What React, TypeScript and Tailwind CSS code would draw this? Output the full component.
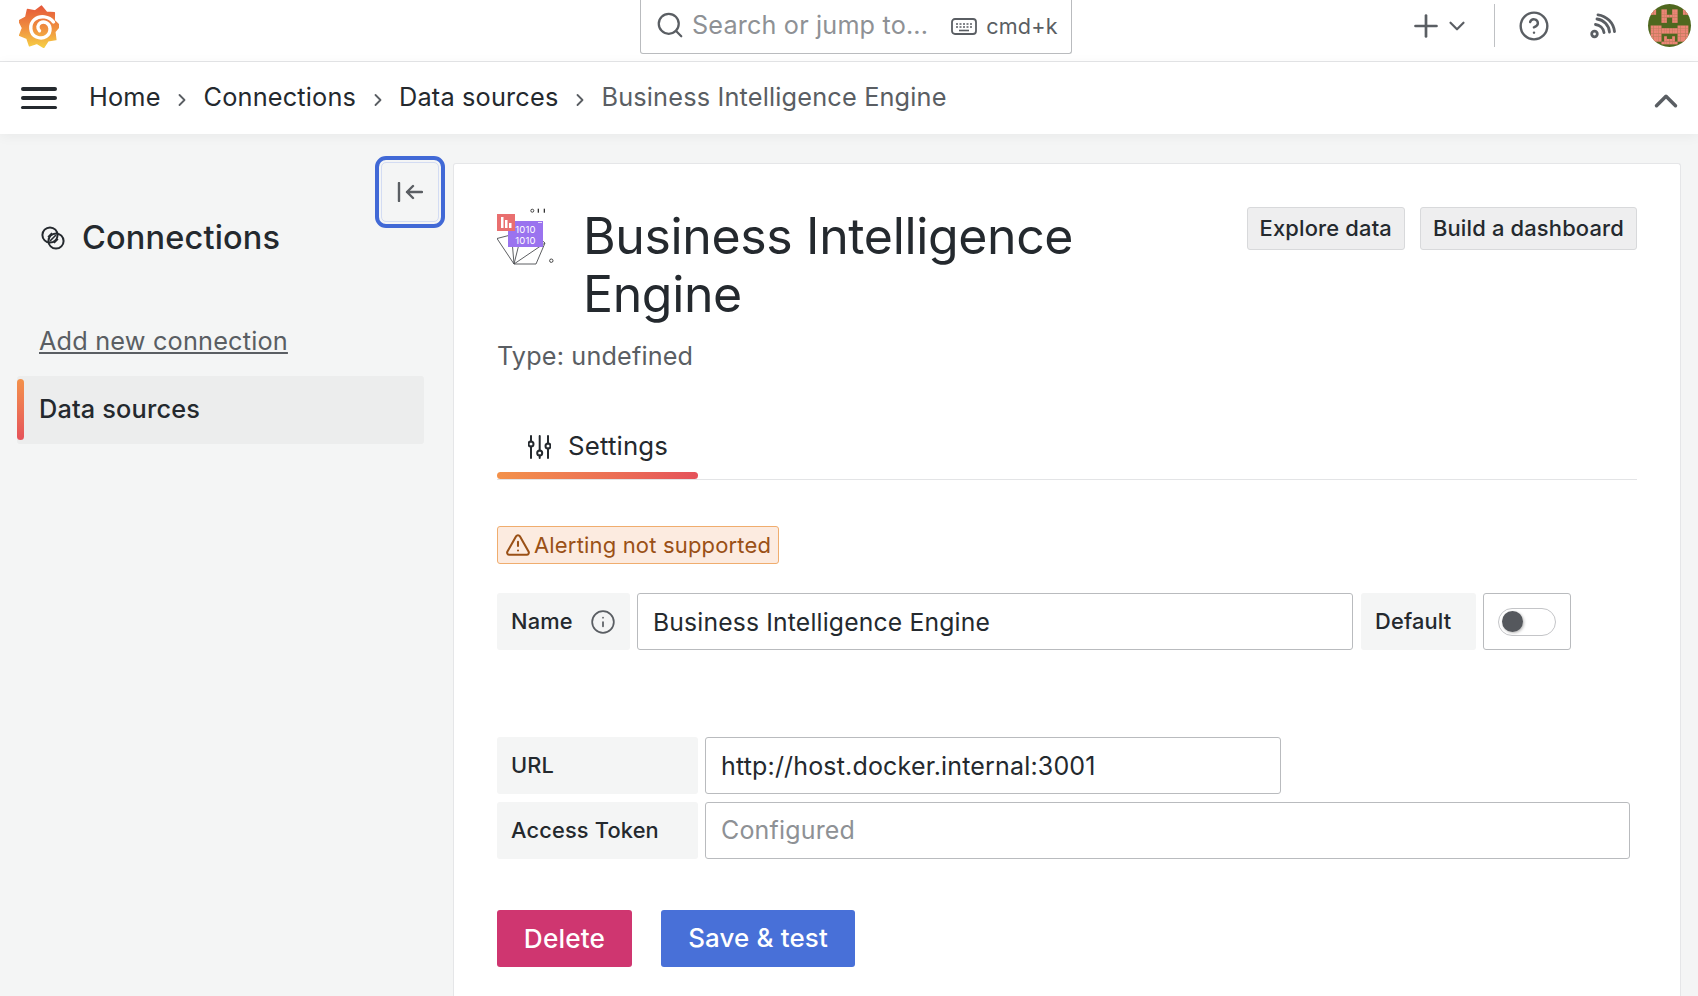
import { ChevronDown, ChevronRight, ChevronUp, CircleHelp, Info, Plus, Search, TriangleAlert } from "lucide-react"

const avatarRows = [
  "........",
  "........",
  ".##..##.",
  ".##..##.",
  ".....###",
  ".....##.",
  ".....##.",
  "........",
  ".####...",
  ".#######",
  ".#######",
  ".####...",
  ".####.#.",
  ".####.##",
  ".....###",
  "........",
]

function Avatar() {
  return (
    <svg width="43" height="43" viewBox="0 0 16 16" className="rounded-full bg-[#4f681f]">
      {avatarRows.map((row, r) =>
        row.split("").map((cell, c) =>
          cell === "#" ? (
            <g key={`${r}-${c}`} fill="#ec8576">
              <rect x={c} y={r} width="1.02" height="1.02" />
              <rect x={15 - c} y={r} width="1.02" height="1.02" />
            </g>
          ) : null,
        ),
      )}
    </svg>
  )
}

function Logo() {
  const points: string[] = []
  for (let i = 0; i < 18; i++) {
    const angle = (i * Math.PI) / 9 - Math.PI / 2 + 0.12
    const radius = i % 2 === 0 ? 21 : 16.5
    points.push(`${20 + radius * Math.cos(angle)},${23 + radius * Math.sin(angle)}`)
  }
  return (
    <svg width="40" height="44" viewBox="0 0 40 44">
      <defs>
        <linearGradient id="sun" x1="0" y1="0" x2="0" y2="1">
          <stop offset="0" stopColor="#e5593a" />
          <stop offset="0.55" stopColor="#f0913f" />
          <stop offset="1" stopColor="#f6cf45" />
        </linearGradient>
      </defs>
      <polygon points={points.join(" ")} fill="url(#sun)" stroke="url(#sun)" strokeWidth="1.5" strokeLinejoin="round" />
      <path
        d="M34.500 18C30 12 21 11 15.500 15.500C10 20 10.500 30 17.500 33C24.500 36 31.500 31.500 31 24.500C30.500 19 25 16.800 21.500 18.800C18.500 20.500 18 24.500 20.500 26.800"
        fill="none"
        stroke="#fff"
        strokeWidth="3.400"
        strokeLinecap="round"
      />
    </svg>
  )
}

function DataSourceIcon() {
  return (
    <svg width="60" height="58" viewBox="27 17 60 58" className="shrink-0">
      <g fill="none" stroke="#4b4d50" strokeWidth="0.9">
        <polygon points="27,48.500 44,74 66,74 75,53 60,40" />
        <path d="M44 74 L42 50 M44 74 L50 50 M44 74 L75 53" />
      </g>
      <rect x="38" y="31" width="35" height="26" fill="#9a73ef" />
      <rect x="68" y="32" width="4" height="1" fill="#e6dcfb" />
      <text x="55.500" y="43" textAnchor="middle" fontSize="9.500" fill="#fff" fontFamily="Inter, sans-serif">1010</text>
      <text x="55.500" y="53.500" textAnchor="middle" fontSize="9.500" fill="#fff" fontFamily="Inter, sans-serif">1010</text>
      <rect x="27" y="24" width="18" height="17" fill="#e96f6f" />
      <path d="M31 38V27h2.500v11zM35 38v-8h2.500v8zM39 38v-5h2.500v5z" fill="#fff" />
      <circle cx="62.300" cy="20.700" r="1.500" fill="none" stroke="#333" strokeWidth="0.9" />
      <rect x="67.700" y="18.700" width="1.300" height="4" fill="#333" />
      <rect x="73.700" y="18.700" width="1.300" height="4" fill="#333" />
      <circle cx="81.300" cy="70.700" r="1.700" fill="none" stroke="#333" strokeWidth="0.9" />
    </svg>
  )
}

function ConnectionsIcon() {
  return (
    <svg width="24" height="24" viewBox="0 0 24 24" fill="none" stroke="#24292e" strokeWidth="2">
      <circle cx="9" cy="9" r="7.600" />
      <circle cx="15" cy="15" r="7.600" />
      <path d="M9 15l6-6M7 11l4-4M13 17l4-4" strokeWidth="1.600" />
    </svg>
  )
}

function SettingsIcon() {
  return (
    <svg width="23" height="24" viewBox="0 0 23 24" fill="none" stroke="#24292e" strokeWidth="2" strokeLinecap="round">
      <path d="M3 1v5.500M3 11.500V23M11.700 1v14.500M11.700 20.500V23M20 1v7.500M20 13.500V23" />
      <circle cx="3" cy="9" r="2.500" />
      <circle cx="11.700" cy="18" r="2.500" />
      <circle cx="20" cy="11" r="2.500" />
    </svg>
  )
}

function FeedIcon() {
  return (
    <svg width="26" height="26" viewBox="0 0 26 26" fill="none" stroke="#5a5e63" strokeWidth="2.800" strokeLinecap="round">
      <circle cx="4.500" cy="21" r="2.800" />
      <path d="M5.500 11.500A9.500 9.500 0 0 1 14 19.500M7 6A14.500 14.500 0 0 1 19.500 19M8 1.800A19 19 0 0 1 24.500 18.500" />
    </svg>
  )
}

function KeyboardIcon() {
  return (
    <svg width="26" height="17" viewBox="0 0 26 17" fill="none" stroke="#5a5e63">
      <rect x="1" y="1" width="24" height="15" rx="3" strokeWidth="1.800" />
      <path d="M5 6h16M5 9h16" strokeWidth="1.600" strokeDasharray="2 1.500" />
      <path d="M8 12.500h10" strokeWidth="1.600" />
    </svg>
  )
}

function Crumb({ label, muted }: { label: string; muted?: boolean }) {
  return <span className={muted ? "text-[#5a5e63]" : "text-[#24292e]"}>{label}</span>
}

function Sep() {
  return <ChevronRight size={20} strokeWidth={2.200} className="mx-[11.500px] mt-[5px] text-[#5a5e63]" />
}

function FieldLabel({ width, children }: { width: string; children: React.ReactNode }) {
  return (
    <div className={`${width} flex h-[57px] shrink-0 items-center rounded-[3px] bg-[#f4f5f5] px-[14px] text-[21.800px] font-medium text-[#24292e]`}>
      {children}
    </div>
  )
}

export default function App() {
  return (
    <div className="flex h-[996px] w-full flex-col overflow-hidden bg-[#f4f5f5] font-[Inter,sans-serif] tracking-[0.01071em] text-[#24292e]">
      {/* Top bar */}
      <header className="flex h-[62px] shrink-0 items-start border-b border-[#e5e6e8] bg-white">
        <div className="ml-[19px] mt-[4px]">
          <Logo />
        </div>
        <div className="ml-[581px] flex h-[54px] w-[432px] items-center rounded-b-[3px] border border-t-0 border-[#b9bbbe] pl-[14px]">
          <Search size={30} strokeWidth={1.800} className="-mt-[3px] text-[#5a5e63]" />
          <span className="ml-[7px] -mt-[2px] text-[25.200px] text-[#8e9195]">Search or jump to...</span>
          <div className="ml-[23px]">
            <KeyboardIcon />
          </div>
          <span className="ml-[9px] text-[21.600px] text-[#5a5e63]">cmd+k</span>
        </div>
        <div className="ml-[336px] mt-[4px] flex h-[43px] items-center text-[#5a5e63]">
          <Plus size={36} strokeWidth={1.800} />
          <ChevronDown size={26} strokeWidth={2} />
          <div className="ml-[24px] h-[43px] w-px bg-[#bfc1c4]" />
          <CircleHelp size={32} strokeWidth={1.800} className="ml-[23px]" />
          <div className="ml-[40px]">
            <FeedIcon />
          </div>
          <div className="ml-[32px]">
            <Avatar />
          </div>
        </div>
      </header>

      {/* Breadcrumb bar */}
      <nav className="relative z-10 flex h-[72px] shrink-0 items-center bg-white pl-[21px] pr-[13px] text-[25.300px] shadow-[0_2px_12px_rgba(0,0,0,0.05)]">
        <div className="flex h-[22px] w-[36px] flex-col justify-between">
          <div className="h-[3.500px] rounded-full bg-[#24292e]" />
          <div className="h-[3.500px] rounded-full bg-[#24292e]" />
          <div className="h-[3.500px] rounded-full bg-[#24292e]" />
        </div>
        <div className="ml-[32px] -mt-[2px] flex items-center">
          <Crumb label="Home" />
          <Sep />
          <Crumb label="Connections" />
          <Sep />
          <Crumb label="Data sources" />
          <Sep />
          <Crumb label="Business Intelligence Engine" muted />
        </div>
        <ChevronUp size={38} strokeWidth={2.200} className="ml-auto mt-[5px] text-[#5a5e63]" />
      </nav>

      <div className="flex min-h-0 flex-1">
        {/* Sidebar */}
        <aside className="relative w-[453px] shrink-0 pl-[17px] pt-[84px]">
          <div className="absolute left-[375px] top-[22px] h-[72px] w-[70px] rounded-[11px] border-[4px] border-[#4169d6] p-[2px]">
            <div className="flex h-full w-full items-center justify-center rounded-[5px] border border-[#d3dcf3]">
              <svg width="26" height="20" viewBox="0 0 26 20" fill="none" stroke="#5a5e63" strokeWidth="2.400" strokeLinecap="round" strokeLinejoin="round">
                <path d="M2 1v18M25 10H10M16 4l-6 6 6 6" />
              </svg>
            </div>
          </div>
          <div className="flex h-[40px] items-center pl-[24px]">
            <ConnectionsIcon />
            <span className="ml-[17px] text-[32.500px] font-medium">Connections</span>
          </div>
          <a className="mt-[64px] block pl-[22px] text-[25.300px] leading-[37px] text-[#5a5e63] underline">Add new connection</a>
          <div className="relative mt-[17px] flex h-[68px] w-[407px] items-center rounded-[3px] bg-[#eceded] pb-[2px] pl-[22px] text-[25.300px] font-medium">
            <div className="absolute bottom-[4px] left-0 top-[3px] w-[7px] rounded-full bg-gradient-to-b from-[#f3914a] to-[#e5525a]" />
            Data sources
          </div>
        </aside>

        {/* Card */}
        <main className="mr-[17px] mt-[29px] flex-1 rounded-t-[3px] border border-b-0 border-[#e5e6e8] bg-white px-[43px] pt-[43px]">
          <div className="flex items-start">
            <DataSourceIcon />
            <h1 className="ml-[26px] w-[520px] text-[50px] font-normal leading-[58px] tracking-[-0.36px]">Business Intelligence Engine</h1>
            <div className="ml-auto flex gap-[15px]">
              <button className="h-[43px] rounded-[3px] border border-[#d8d9db] bg-[#eeeeef] px-[12px] text-[21.900px] font-medium">Explore data</button>
              <button className="h-[43px] rounded-[3px] border border-[#d8d9db] bg-[#eeeeef] px-[12px] text-[21.900px] font-medium">Build a dashboard</button>
            </div>
          </div>
          <div className="mt-[15px] text-[25.200px] leading-[37px] text-[#5a5e63]">Type: undefined</div>

          {/* Tabs */}
          <div className="mt-[39px] flex h-[66px] border-b border-[#e3e4e6]">
            <div className="relative flex h-[65px] w-[201px] items-start pl-[31px] pt-[21px]">
              <SettingsIcon />
              <span className="ml-[17px] -mt-[1px] text-[25.800px] leading-[24px]">Settings</span>
              <div className="absolute bottom-0 left-0 right-0 h-[7px] rounded-full bg-gradient-to-r from-[#f3914a] to-[#e5525a]" />
            </div>
          </div>

          <div className="mt-[46px] flex h-[38px] w-[282px] items-center rounded-[3px] border border-[#f0ad6e] bg-[#fcebe0] pl-[7px] text-[22px] whitespace-nowrap text-[#9a5016]">
            <TriangleAlert size={26} strokeWidth={1.900} />
            <span className="ml-[3px]">Alerting not supported</span>
          </div>

          <div className="mt-[29px] flex items-center">
            <FieldLabel width="w-[133px]">
              Name
              <Info size={26} strokeWidth={1.600} className="ml-[17px] text-[#5a5e63]" />
            </FieldLabel>
            <div className="ml-[7px] flex h-[57px] w-[716px] items-center rounded-[3px] border border-[#b9bbbe] pl-[15px] pt-[2px] text-[24.700px]">Business Intelligence Engine</div>
            <div className="ml-[8px]">
              <FieldLabel width="w-[115px]">Default</FieldLabel>
            </div>
            <div className="ml-[7px] flex h-[57px] w-[88px] items-center rounded-[3px] border border-[#b9bbbe] pl-[14px]">
              <div className="flex h-[28px] w-[58px] items-center rounded-full border border-[#c4c5c8] pl-[3px]">
                <div className="h-[21px] w-[21px] rounded-full bg-[#55585d] shadow-[1px_1px_3px_rgba(0,0,0,0.3)]" />
              </div>
            </div>
          </div>

          <div className="mt-[87px] flex items-center gap-[7px]">
            <FieldLabel width="w-[201px]">URL</FieldLabel>
            <div className="flex h-[57px] w-[576px] items-center rounded-[3px] border border-[#b9bbbe] pl-[15px] pt-[2px] text-[25px]">http://host.docker.internal:3001</div>
          </div>
          <div className="mt-[8px] flex items-center gap-[7px]">
            <FieldLabel width="w-[201px]">Access Token</FieldLabel>
            <div className="flex h-[57px] w-[925px] items-center rounded-[3px] border border-[#b9bbbe] pl-[15px] text-[25px] text-[#8e9195]">Configured</div>
          </div>

          <div className="mt-[51px] flex gap-[29px]">
            <button className="h-[57px] w-[135px] rounded-[3px] bg-[#cf3670] text-[26.200px] font-medium text-white">Delete</button>
            <button className="h-[57px] w-[194px] rounded-[3px] bg-[#4870d8] text-[25.900px] font-medium text-white">Save &amp; test</button>
          </div>
        </main>
      </div>
    </div>
  )
}
